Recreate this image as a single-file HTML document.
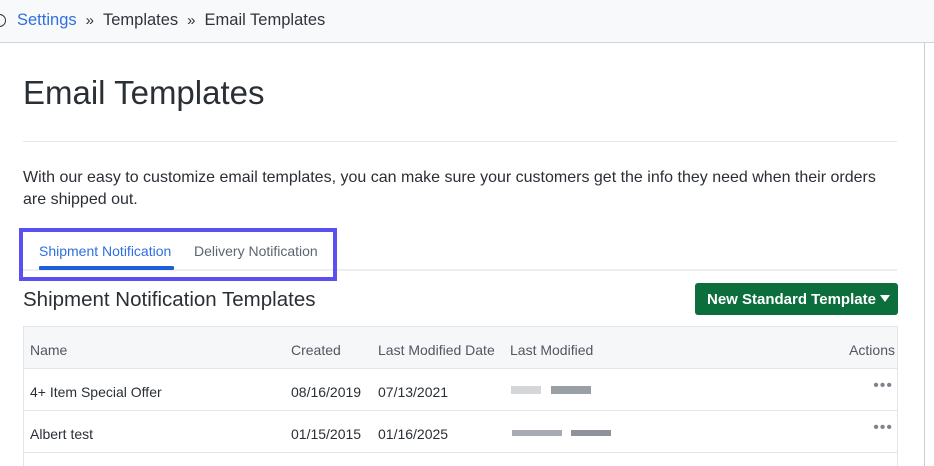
<!DOCTYPE html>
<html><head><meta charset="utf-8"><style>
*{margin:0;padding:0;box-sizing:border-box}
body{width:934px;height:466px;overflow:hidden;background:#fff;font-family:"Liberation Sans",sans-serif;color:#2a2f36;position:relative}
.top{position:absolute;left:0;top:0;width:934px;height:43px;background:#f8f9fb;border-bottom:1px solid #cfd5dc}
.top .t{position:absolute;left:17px;top:11px;font-size:16.5px;color:#30353b}
.top .t a{color:#2f6fe0;text-decoration:none}
.top .t .s{margin:0 9px;font-size:15px}
.circ{position:absolute;left:-7px;top:14px;width:13px;height:13px;border:1.5px solid #333;border-radius:50%}
.vr{position:absolute;left:924px;top:43px;width:1px;height:423px;background:#c9ced4}
h1{position:absolute;left:23px;top:74px;font-size:33px;font-weight:normal;color:#2a2f36}
.hr{position:absolute;left:23px;top:141px;width:874px;height:1px;background:#e2e5e9}
.p{position:absolute;left:23px;top:167px;width:870px;font-size:16px;line-height:22px;color:#2a2f36}
.tabs{position:absolute;left:23px;top:269px;width:874px;height:2px;background:#eceef1}
.tab1{position:absolute;left:39px;top:243px;font-size:14px;color:#2f6fe0}
.ul{position:absolute;left:39px;top:266px;width:135px;height:4px;background:#1f5fd8;border-radius:1px}
.tab2{position:absolute;left:194px;top:243px;font-size:14px;color:#5d6570}
.box{position:absolute;left:19px;top:228px;width:318px;height:53px;border:4px solid #5a4ff0}
h2{position:absolute;left:23px;top:288px;font-size:20.5px;font-weight:normal;color:#2a2f36}
.btn{position:absolute;left:695px;top:283px;width:203px;height:32px;background:#0d6e3d;border-radius:3px;color:#fff;font-size:15px;font-weight:600}
.btn span{position:absolute;left:12px;top:8px}
.btn i{position:absolute;left:185px;top:12px;width:0;height:0;border-left:5px solid transparent;border-right:5px solid transparent;border-top:7px solid #fff}
.tbl{position:absolute;left:23px;top:326px;width:875px;height:140px;border:1px solid #e2e5e9;border-bottom:none}
.row{position:absolute;left:0;width:873px;height:42px;border-bottom:1px solid #e2e5e9;font-size:14px;color:#2a2f36}
.row div{position:absolute;top:15px}
.hd{background:#f6f7f9;color:#505760}
.dots{right:4px;top:8px!important;color:#7d848d;font-size:16px;letter-spacing:1px}
.bl{position:absolute;height:8px}
</style></head><body>
<div class="top"><div class="circ"></div><div class="t"><a>Settings</a><span class="s">»</span>Templates<span class="s">»</span>Email Templates</div></div>
<div class="vr"></div>
<h1>Email Templates</h1>
<div class="hr"></div>
<div class="p">With our easy to customize email templates, you can make sure your customers get the info they need when their orders are shipped out.</div>
<div class="tabs"></div>
<div class="tab1">Shipment Notification</div>
<div class="ul"></div>
<div class="tab2">Delivery Notification</div>
<div class="box"></div>
<h2>Shipment Notification Templates</h2>
<div class="btn"><span>New Standard Template</span><i></i></div>
<div class="tbl">
<div class="row hd" style="top:0"><div style="left:6px">Name</div><div style="left:267px">Created</div><div style="left:354px">Last Modified Date</div><div style="left:486px">Last Modified</div><div style="right:2px">Actions</div></div>
<div class="row" style="top:42px"><div style="left:6px">4+ Item Special Offer</div><div style="left:267px">08/16/2019</div><div style="left:354px">07/13/2021</div><div class="dots">•••</div>
<span class="bl" style="left:487px;top:17px;width:30px;background:#d4d6da"></span><span class="bl" style="left:527px;top:17px;width:40px;background:#9a9ea5"></span></div>
<div class="row" style="top:84px"><div style="left:6px">Albert test</div><div style="left:267px">01/15/2015</div><div style="left:354px">01/16/2025</div><div class="dots">•••</div>
<span class="bl" style="left:488px;top:19px;width:50px;height:6px;background:#a8acb2"></span><span class="bl" style="left:547px;top:19px;width:40px;height:6px;background:#8e939a"></span></div>
</div>
</body></html>
